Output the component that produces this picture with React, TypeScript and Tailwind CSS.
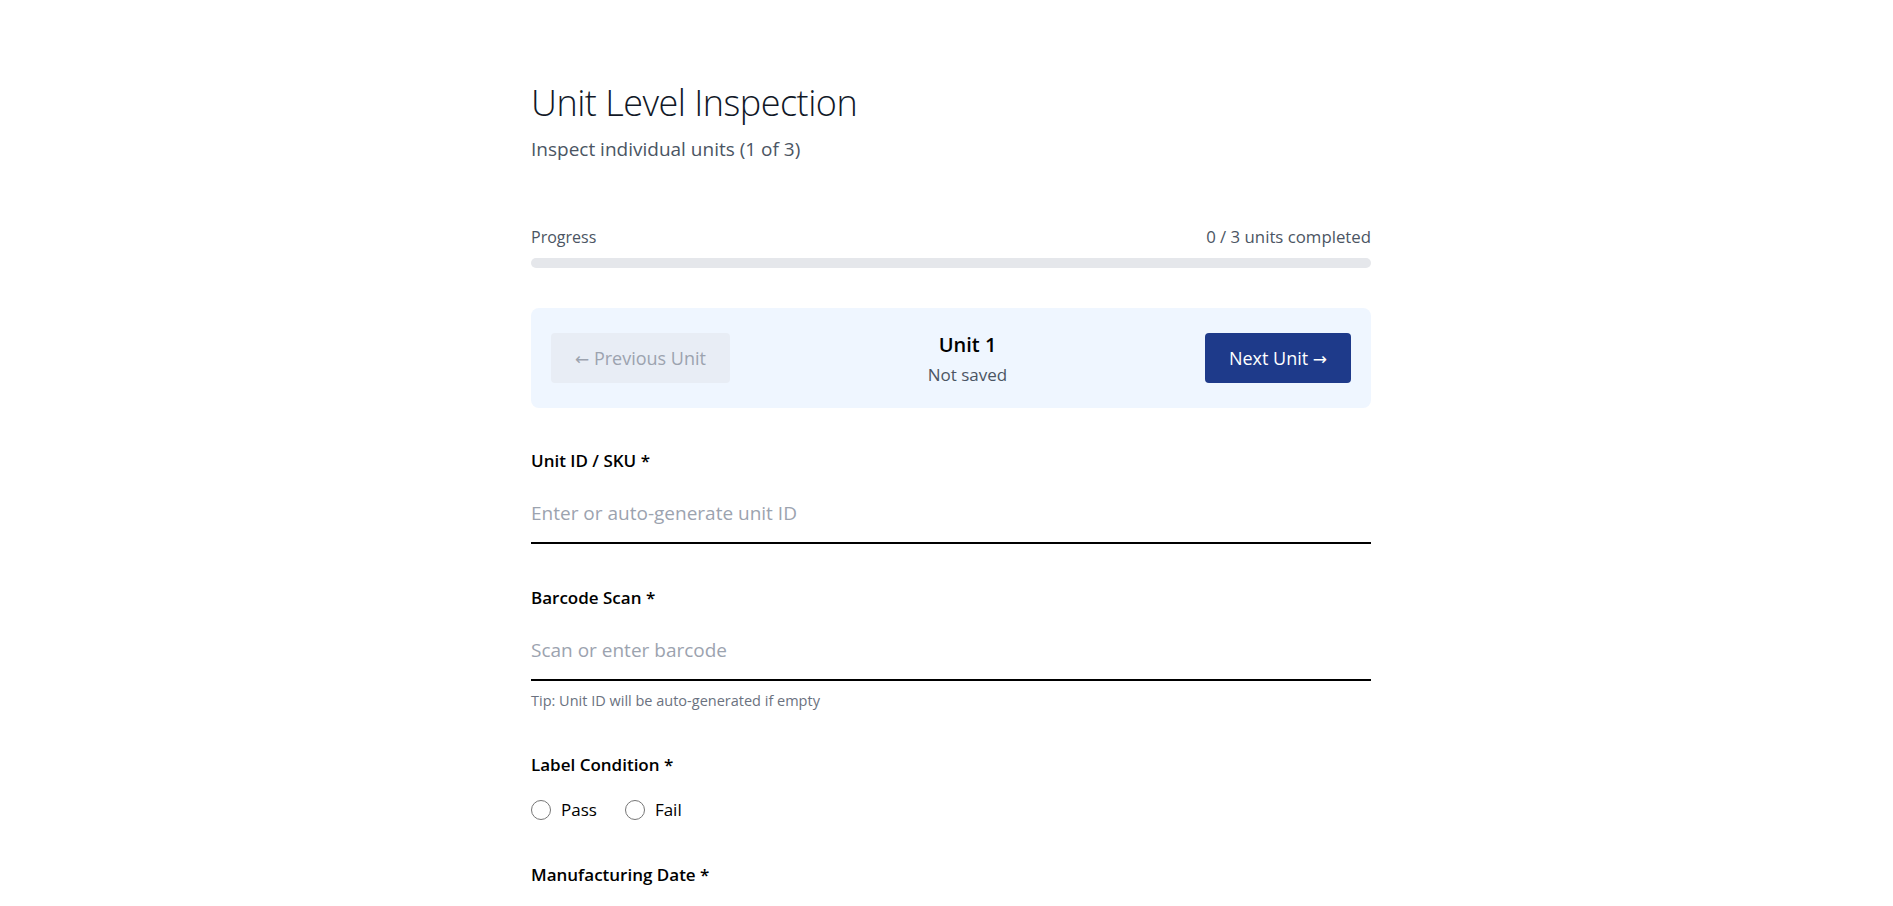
import React from "react";

const font = { fontFamily: '"Open Sans", "Noto Sans", Arial, sans-serif' };
const arrowFont = { fontFamily: '"DejaVu Sans", "Noto Sans", sans-serif' };

function Radio({ label }: { label: string }) {
  return (
    <label className="flex items-center gap-[10px] cursor-pointer">
      <span className="block w-[20px] h-[20px] rounded-full border-[1.5px] border-[#767676] bg-white" />
      <span className="text-[17px] leading-[24px] text-black">{label}</span>
    </label>
  );
}

export default function App() {
  return (
    <div className="h-[906px] overflow-hidden bg-white" style={font}>
      <div className="mx-auto w-[849px] pl-[9px] pt-[79px]">
        <h1 className="text-[36px] leading-[48px] font-light tracking-[-0.5px] text-[#111827]">Unit Level Inspection</h1>
        <p className="mt-[8px] text-[19px] leading-[28px] text-[#4b5563]">Inspect individual units (1 of 3)</p>

        <div className="mt-[62px] flex items-center justify-between text-[16px] leading-[24px] text-[#4b5563]">
          <span>Progress</span>
          <span className="text-[16.8px]">0 / 3 units completed</span>
        </div>
        <div className="mt-[9px] h-[10px] w-full rounded-full bg-[#e5e7eb]" />

        <div className="mt-[40px] flex h-[100px] items-center justify-between rounded-lg bg-[#eff6ff] px-5">
          <button
            disabled
            className="h-[50px] w-[179px] rounded-[4px] bg-[#e8edf5] pt-[2px] text-[18px] text-[#9ca3af]"
          >
            <span style={arrowFont} className="text-[17px]">←</span> Previous Unit
          </button>
          <div className="flex flex-col items-center pt-[3px]">
            <span className="text-[20px] leading-[28px] font-semibold text-black">Unit 1</span>
            <span className="mt-[3px] text-[17px] leading-[26px] text-[#4b5563]">Not saved</span>
          </div>
          <button className="h-[50px] w-[146px] rounded-[4px] bg-[#1e3a8a] pt-[2px] text-[18px] text-white">
            Next Unit <span style={arrowFont} className="text-[17px]">→</span>
          </button>
        </div>

        <label className="mt-[41px] block text-[17px] leading-[24px] font-semibold text-black">Unit ID / SKU *</label>
        <input
          className="mt-[11px] block h-[60px] w-full border-b-2 border-black bg-transparent text-[19px] text-black outline-none placeholder:text-[#9ca3af]"
          placeholder="Enter or auto-generate unit ID"
        />

        <label className="mt-[42px] block text-[17px] leading-[24px] font-semibold text-black">Barcode Scan *</label>
        <input
          className="mt-[11px] block h-[60px] w-full border-b-2 border-black bg-transparent text-[19px] text-black outline-none placeholder:text-[#9ca3af]"
          placeholder="Scan or enter barcode"
        />
        <p className="mt-[10px] text-[14.5px] leading-[20px] text-[#6b7280]">Tip: Unit ID will be auto-generated if empty</p>

        <label className="mt-[42px] block text-[17px] leading-[24px] font-semibold text-black">Label Condition *</label>
        <div className="mt-[21px] flex items-center gap-[28px]">
          <Radio label="Pass" />
          <Radio label="Fail" />
        </div>

        <label className="mt-[41px] block text-[17px] leading-[24px] font-semibold text-black">Manufacturing Date *</label>
        <input
          type="date"
          className="mt-[11px] block h-[60px] w-full border-b-2 border-black bg-transparent text-[19px] text-black outline-none"
        />
      </div>
    </div>
  );
}
